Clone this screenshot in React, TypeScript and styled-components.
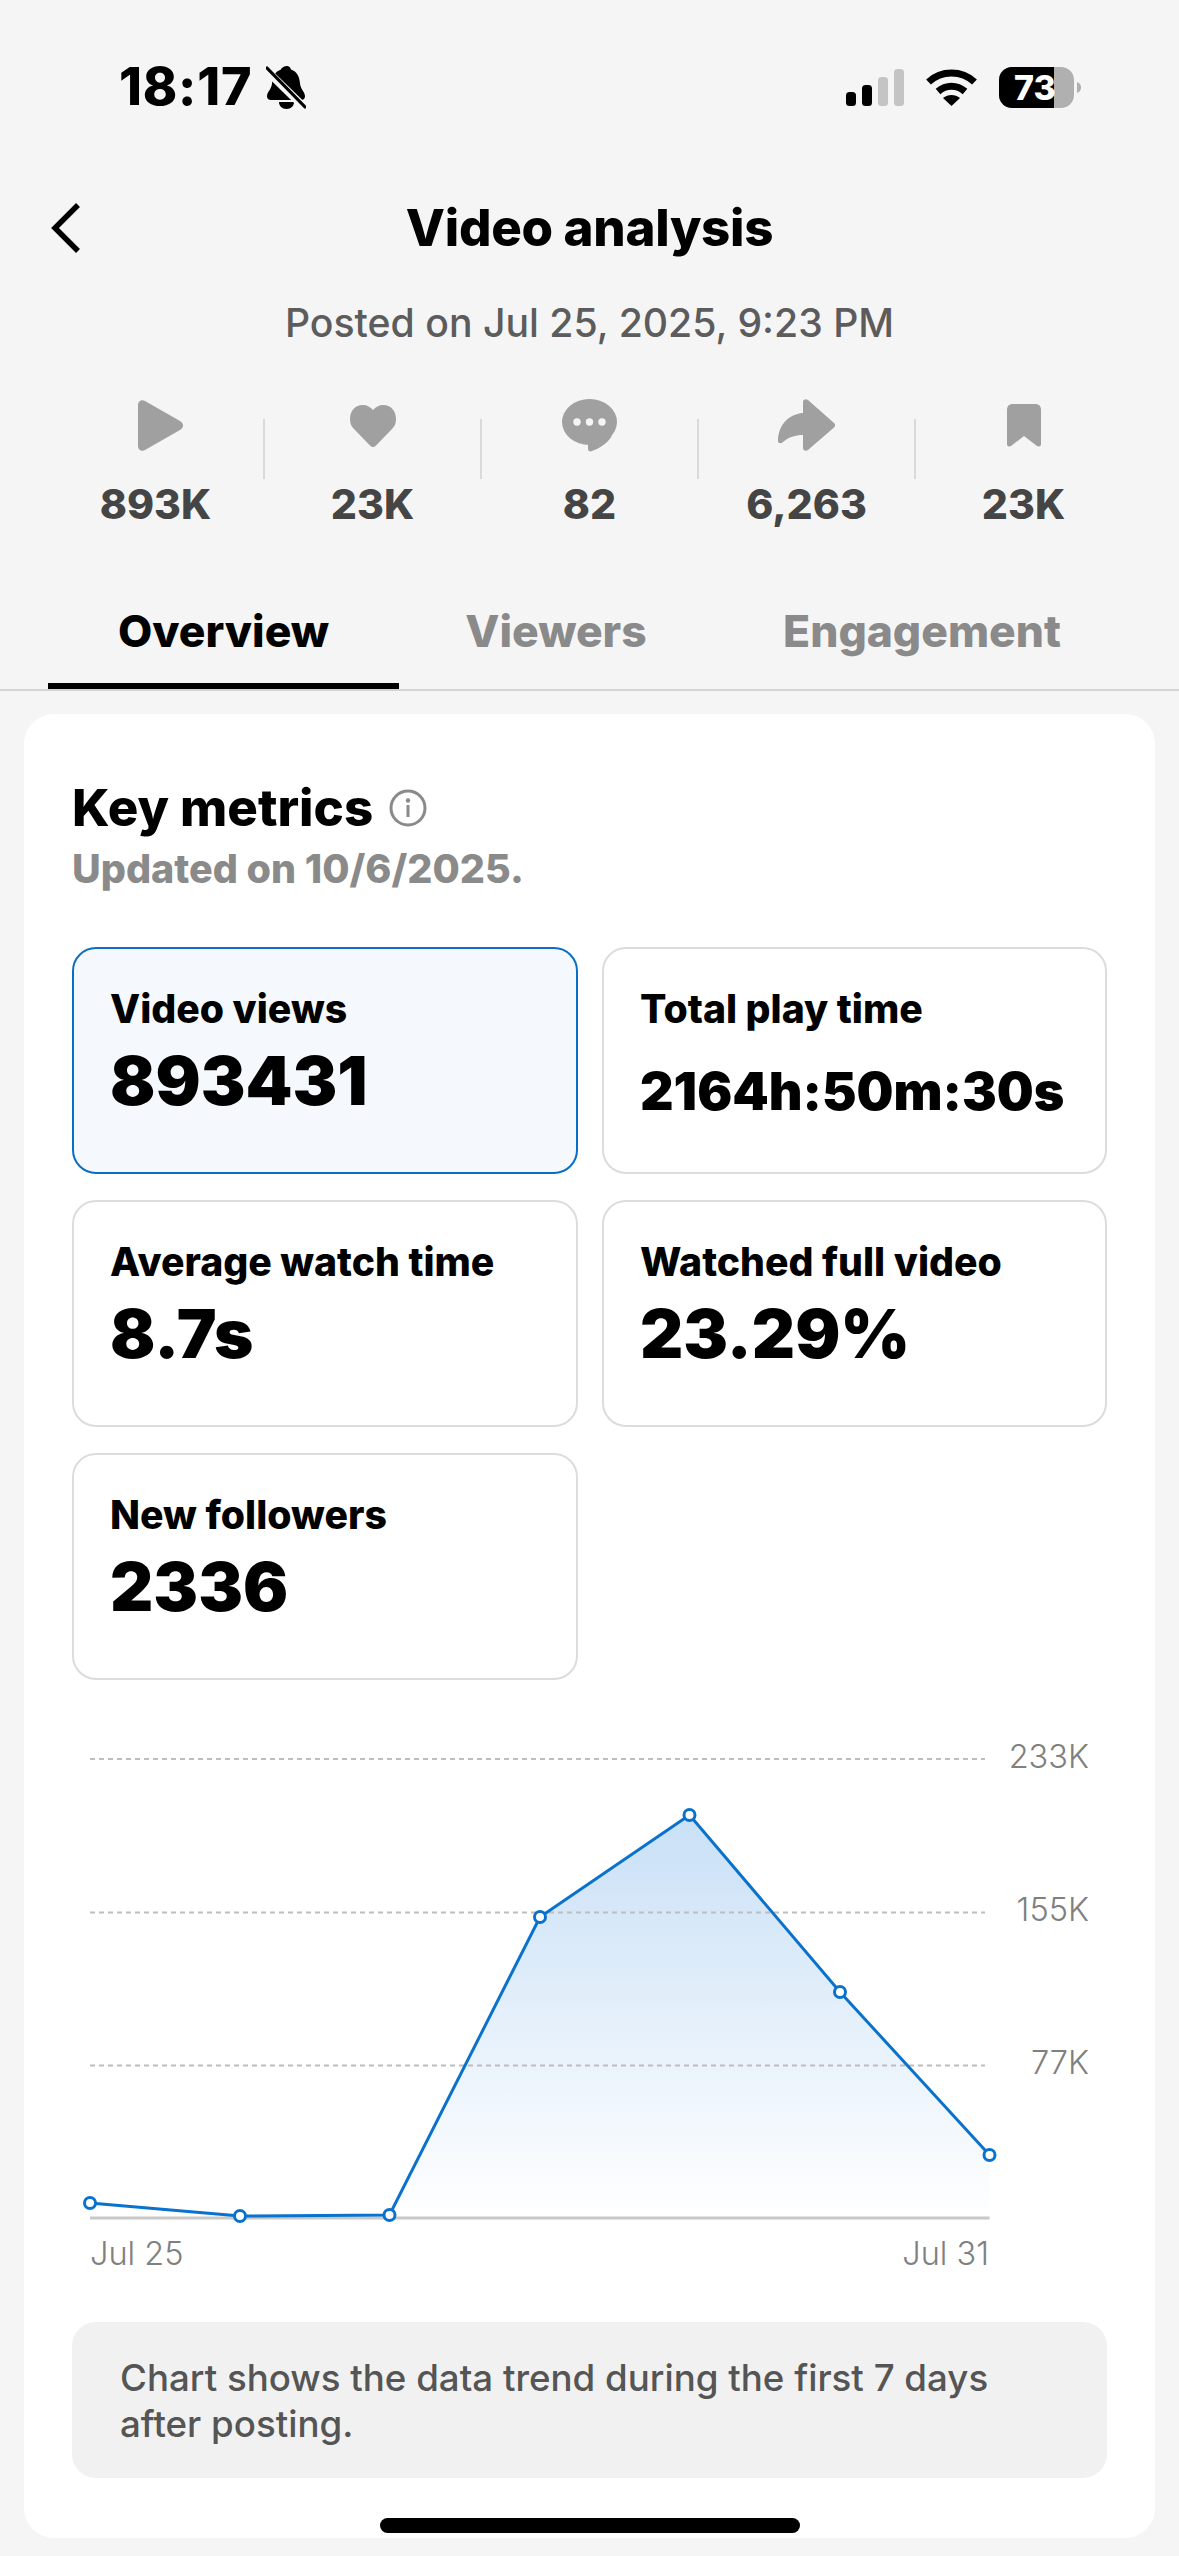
import React from "react";
import styled, { createGlobalStyle } from "styled-components";

const Global = createGlobalStyle`
  html, body { margin: 0; padding: 0; background: #f5f5f5; }
  body { font-family: Inter, "Liberation Sans", sans-serif; }
`;

const Screen = styled.div`
  width: 1179px;
  height: 2556px;
  background: #f5f5f5;
  overflow: hidden;
  position: relative;
  display: flex;
  flex-direction: column;
`;

const StatusBar = styled.div`
  height: 172px;
  box-sizing: border-box;
  padding: 60px 97px 0 119px;
  display: flex;
  justify-content: space-between;
  align-items: flex-start;
`;

const TimeGroup = styled.div`
  display: flex;
  align-items: center;
  gap: 14px;
  height: 54px;
`;

const Time = styled.span`
  font-size: 52px;
  font-weight: 800;
  letter-spacing: 0.8px;
  color: #000;
  line-height: 54px;
`;

const StatusIcons = styled.div`
  display: flex;
  align-items: flex-start;
  padding-top: 7px;
`;

const Header = styled.div`
  height: 110px;
  padding: 0 48px;
  display: flex;
  align-items: center;
  justify-content: center;
  position: relative;
`;

const BackIcon = styled.svg`
  position: absolute;
  left: 48px;
  top: 30px;
`;

const Title = styled.h1`
  margin: 0;
  font-size: 51px;
  font-weight: 800;
  color: #000;
  letter-spacing: -0.3px;
`;

const Posted = styled.div`
  margin-top: 17px;
  text-align: center;
  font-size: 39.2px;
  line-height: 48px;
  font-weight: 500;
  color: #5c5c5c;
`;

const Stats = styled.div`
  margin-top: 52px;
  padding: 0 47px;
  display: grid;
  grid-template-columns: repeat(5, 217px);
`;

const Stat = styled.div`
  display: flex;
  flex-direction: column;
  align-items: center;
  position: relative;
  height: 130px;

  &:not(:last-child)::after {
    content: "";
    position: absolute;
    right: -1px;
    top: 20px;
    height: 60px;
    width: 2px;
    background: #dadada;
  }
`;

const StatIconBox = styled.div`
  height: 60px;
  display: flex;
  align-items: center;
  justify-content: center;
`;

const StatValue = styled.div`
  margin-top: 27px;
  font-size: 41px;
  line-height: 50px;
  font-weight: 800;
  color: #454545;
`;

const Tabs = styled.div`
  margin-top: 46px;
  height: 116px;
  box-sizing: border-box;
  border-bottom: 2px solid #d4d4d4;
  display: flex;
  padding-left: 48px;
`;

const Tab = styled.div<{ $active?: boolean; $w: number }>`
  width: ${(p) => p.$w}px;
  height: 114px;
  box-sizing: border-box;
  text-align: center;
  padding-top: 28px;
  font-size: 44.4px;
  line-height: 56px;
  font-weight: 800;
  color: ${(p) => (p.$active ? "#000" : "#8a8a8a")};
  border-bottom: ${(p) => (p.$active ? "6px solid #000" : "0")};
`;

const Card = styled.div`
  margin: 23px 24px 0;
  height: 1824px;
  background: #fff;
  border-radius: 30px;
  box-sizing: border-box;
  padding: 64px 48px 0;
`;

const CardTitleRow = styled.div`
  display: flex;
  align-items: center;
  gap: 16px;
`;

const CardTitle = styled.h2`
  margin: 0;
  font-size: 51px;
  line-height: 60px;
  font-weight: 800;
  color: #000;
`;

const Updated = styled.div`
  margin-top: 6px;
  font-size: 39.5px;
  line-height: 50px;
  font-weight: 800;
  color: #8a8a8a;
`;

const MetricGrid = styled.div`
  margin-top: 53px;
  display: grid;
  grid-template-columns: 506px 505px;
  grid-auto-rows: 227px;
  gap: 26px 24px;
`;

const Metric = styled.div<{ $active?: boolean }>`
  box-sizing: border-box;
  border-radius: 24px;
  border: 2px solid ${(p) => (p.$active ? "#0a6fc4" : "#dcdcdc")};
  background: ${(p) => (p.$active ? "#f5f9fe" : "#fff")};
  padding: 37px 36px 0;
`;

const MetricLabel = styled.div`
  font-size: 39.2px;
  line-height: 46px;
  font-weight: 800;
  color: #000;
`;

const MetricValue = styled.div<{ $small?: boolean }>`
  margin-top: ${(p) => (p.$small ? 25 : 9)}px;
  font-size: ${(p) => (p.$small ? 52 : 67)}px;
  line-height: ${(p) => (p.$small ? 70 : 80)}px;
  font-weight: 900;
  color: #000;
`;

const ChartWrap = styled.div`
  margin-top: 48px;
  margin-left: -48px;
`;

const ChartSvg = styled.svg`
  display: block;
`;

const AxisText = styled.text`
  font-family: Inter, "Liberation Sans", sans-serif;
  font-size: 32.5px;
  font-weight: 300;
  fill: #808080;
`;

const Note = styled.div`
  height: 156px;
  box-sizing: border-box;
  background: #f1f1f1;
  border-radius: 24px;
  padding: 33px 48px;
  font-size: 36.7px;
  line-height: 46px;
  font-weight: 500;
  color: #555;
`;

const HomeBar = styled.div`
  position: absolute;
  left: 380px;
  bottom: 23px;
  width: 420px;
  height: 15px;
  border-radius: 8px;
  background: #000;
`;

const pts: [number, number][] = [
  [90, 2203], [240, 2216], [389.5, 2215], [540, 1917], [689.5, 1815], [840, 1992], [989.5, 2155],
];

const Chart = () => {
  const ox = 24;
  const W = 1131;
  const y0 = 1728;
  const mapY = (y: number) => y - y0;
  const mapX = (x: number) => x - ox;
  const line = pts.map(([x, y]) => `${mapX(x)},${mapY(y)}`).join(" ");
  const area = `${mapX(90)},${mapY(2218)} ${line} ${mapX(989.5)},${mapY(2218)}`;
  return (
    <ChartSvg width={W} height={594} viewBox={`0 0 ${W} 594`}>
      <defs>
        <linearGradient id="fill" x1="0" y1="0" x2="0" y2="1">
          <stop offset="0" stopColor="#c9e0f6" />
          <stop offset="1" stopColor="#ffffff" />
        </linearGradient>
      </defs>
      <polygon points={area} fill="url(#fill)" />
      {[1759, 1912.5, 2065.5].map((y, i) => (
        <line key={i} x1={mapX(90)} x2={mapX(985)} y1={mapY(y)} y2={mapY(y)} stroke="#bdbdbd" strokeWidth="2" strokeDasharray="5 4" />
      ))}
      <line x1={mapX(90)} x2={mapX(989.5)} y1={mapY(2218)} y2={mapY(2218)} stroke="#c8c8c8" strokeWidth="3" />
      <polyline points={line} fill="none" stroke="#0a72cc" strokeWidth="3" />
      {pts.map(([x, y], i) => (
        <circle key={i} cx={mapX(x)} cy={mapY(y)} r="5.5" fill="#fff" stroke="#0a72cc" strokeWidth="3" />
      ))}
      <AxisText x={mapX(1089)} y={mapY(1768)} textAnchor="end">233K</AxisText>
      <AxisText x={mapX(1089)} y={mapY(1921)} textAnchor="end">155K</AxisText>
      <AxisText x={mapX(1089)} y={mapY(2074)} textAnchor="end">77K</AxisText>
      <AxisText x={mapX(90)} y={mapY(2265)}>Jul 25</AxisText>
      <AxisText x={mapX(989)} y={mapY(2265)} textAnchor="end">Jul 31</AxisText>
    </ChartSvg>
  );
};

const PlayIcon = () => (
  <svg width="54" height="51" viewBox="-9 0 54 51"><path d="M0 5C0 1 4-1 7 1l35 20c4 2.500 4 6.500 0 9L7 50c-3 2-7 0-7-4z" fill="#a0a0a0" /></svg>
);
const HeartIcon = () => (
  <svg width="46" height="42" viewBox="0 0 46 42"><path d="M23 42c-1 0-2-.5-3-1.500L4 24C1 21 0 18 0 14 0 6 5 0 13 0c4 0 7.500 2 10 5 2.500-3 6-5 10-5 8 0 13 6 13 14 0 4-1 7-4 10L26 40.500c-1 1-2 1.500-3 1.500z" fill="#a0a0a0" /></svg>
);
const CommentIcon = () => (
  <svg width="55" height="53" viewBox="0 0 55 53">
    <ellipse cx="27.5" cy="23" rx="27.5" ry="23" fill="#a0a0a0" />
    <path d="M26 42v8c0 2 2 3 4 2 6-2 15-7 20-15z" fill="#a0a0a0" />
    <circle cx="15" cy="23" r="3.700" fill="#f5f5f5" /><circle cx="27.500" cy="23" r="3.700" fill="#f5f5f5" /><circle cx="40" cy="23" r="3.700" fill="#f5f5f5" />
  </svg>
);
const ShareIcon = () => (
  <svg width="57" height="53" viewBox="0 0 57 53"><path d="M25 3c0-2.500 3-3.500 5-2l26 23c1.500 1.500 1.500 3 0 4.500L30 51c-2 1.500-5 .5-5-2V36c-8 0-14 2-20 7-2 2-5 1.500-5-1C0 27 10 15 25 14z" fill="#a0a0a0" /></svg>
);
const BookmarkIcon = () => (
  <svg width="34" height="43" viewBox="0 0 34 43"><path d="M6 0h22c4 0 6 2 6 6v34c0 2.500-2 3-4 2L17 32 4 42c-2 1-4 .5-4-2V6c0-4 2-6 6-6z" fill="#a0a0a0" /></svg>
);

const BellOff = () => (
  <svg width="40" height="43" viewBox="0 0 40 43">
    <path d="M21 0c2 0 3.500 1.500 4 3.500 6 2 8.500 7 9 14 .5 6 5 8 5 13 0 2.500-2 3.500-4 3.500H5c-2 0-4-1-4-3.500 0-5 4.500-7 5-13 .5-7 3-12 9-14C15.500 1.500 19 0 21 0z" fill="#000" />
    <path d="M13 36h15c0 4-3 7-7.500 7S13 40 13 36z" fill="#000" />
    <path d="M-1 3l40 39" stroke="#f5f5f5" strokeWidth="8" />
    <path d="M1 2l38 39" stroke="#000" strokeWidth="3.200" strokeLinecap="round" />
  </svg>
);

const StatusSvg = () => (
  <svg width="236" height="42" viewBox="0 0 236 42">
    <rect x="0" y="25" width="10" height="14" rx="3.500" fill="#000" />
    <rect x="16" y="18" width="10" height="21" rx="3.500" fill="#000" />
    <rect x="32" y="10" width="10" height="29" rx="3.500" fill="#c4c4c4" />
    <rect x="48" y="2" width="10" height="37" rx="3.500" fill="#c4c4c4" />
    <path d="M82.500 15c13-12 33-12 46 0" fill="none" stroke="#000" strokeWidth="7" />
    <path d="M92 24.500c8-7 19-7 27 0" fill="none" stroke="#000" strokeWidth="7" />
    <path d="M97 31c5-4 12-4 17 0l-8.500 8z" fill="#000" />
    <rect x="153" y="0" width="75" height="41" rx="13" fill="#b0b0b0" />
    <path d="M166 0h42v41h-42a13 13 0 0 1-13-13V13a13 13 0 0 1 13-13z" fill="#000" />
    <path d="M231 15c3 1 4 3 4 5.500s-1 4.500-4 5.500z" fill="#b0b0b0" />
    <text x="189" y="33" textAnchor="middle" fontFamily="Inter, sans-serif" fontWeight="800" fontSize="34" fill="#fff">73</text>
  </svg>
);

const InfoIcon = () => (
  <svg width="38" height="38" viewBox="0 0 38 38">
    <circle cx="19" cy="19" r="17" fill="none" stroke="#8a8a8a" strokeWidth="3" />
    <circle cx="19" cy="11.500" r="2.200" fill="#8a8a8a" />
    <rect x="17.500" y="16" width="3" height="12" fill="#8a8a8a" />
  </svg>
);

const stats = [
  { icon: <PlayIcon />, v: "893K" },
  { icon: <HeartIcon />, v: "23K" },
  { icon: <CommentIcon />, v: "82" },
  { icon: <ShareIcon />, v: "6,263" },
  { icon: <BookmarkIcon />, v: "23K" },
];

export default function App() {
  return (
    <Screen>
      <Global />
      <StatusBar>
        <TimeGroup>
          <Time>18:17</Time>
          <BellOff />
        </TimeGroup>
        <StatusIcons><StatusSvg /></StatusIcons>
      </StatusBar>
      <Header>
        <BackIcon width="36" height="52" viewBox="0 0 36 52">
          <path d="M30 3L7 26l23 23" fill="none" stroke="#000" strokeWidth="5.500" />
        </BackIcon>
        <Title>Video analysis</Title>
      </Header>
      <Posted>Posted on Jul 25, 2025, 9:23 PM</Posted>
      <Stats>
        {stats.map((s, i) => (
          <Stat key={i}>
            <StatIconBox>{s.icon}</StatIconBox>
            <StatValue>{s.v}</StatValue>
          </Stat>
        ))}
      </Stats>
      <Tabs>
        <Tab $active $w={351}>Overview</Tab>
        <Tab $w={314}>Viewers</Tab>
        <Tab $w={418}>Engagement</Tab>
      </Tabs>
      <Card>
        <CardTitleRow>
          <CardTitle>Key metrics</CardTitle>
          <InfoIcon />
        </CardTitleRow>
        <Updated>Updated on 10/6/2025.</Updated>
        <MetricGrid>
          <Metric $active><MetricLabel>Video views</MetricLabel><MetricValue>893431</MetricValue></Metric>
          <Metric><MetricLabel>Total play time</MetricLabel><MetricValue $small>2164h:50m:30s</MetricValue></Metric>
          <Metric><MetricLabel>Average watch time</MetricLabel><MetricValue>8.7s</MetricValue></Metric>
          <Metric><MetricLabel>Watched full video</MetricLabel><MetricValue>23.29%</MetricValue></Metric>
          <Metric><MetricLabel>New followers</MetricLabel><MetricValue>2336</MetricValue></Metric>
        </MetricGrid>
        <ChartWrap><Chart /></ChartWrap>
        <Note>Chart shows the data trend during the first 7 days after posting.</Note>
      </Card>
      <HomeBar />
    </Screen>
  );
}
